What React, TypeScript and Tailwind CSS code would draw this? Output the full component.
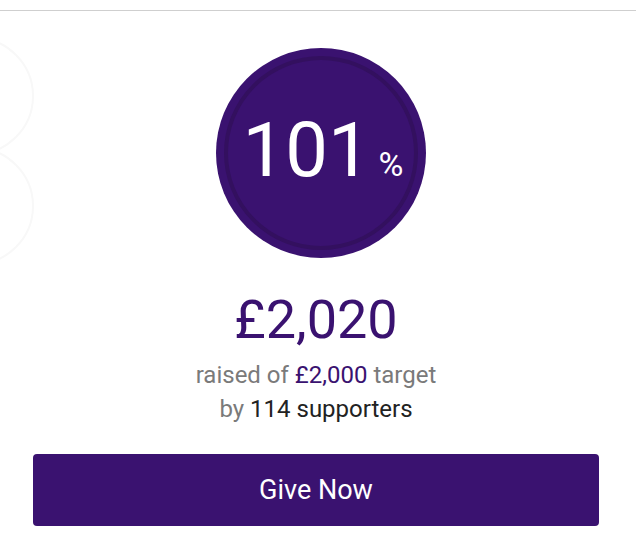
import React from 'react';

// Donation progress card: percentage badge, totals and a call to action
const App: React.FC = () => {
  return (
    <div className="relative w-[636px] h-[533px] overflow-hidden bg-white font-['Roboto',sans-serif]">
      {/* Faint decorative rings on the left edge */}
      <svg className="absolute left-0 top-[11px]" width="60" height="270" viewBox="0 0 60 270" fill="none">
        <circle cx="-25" cy="85" r="58" stroke="#f8f8f8" strokeWidth="2" />
        <circle cx="-25" cy="195" r="58" stroke="#f8f8f8" strokeWidth="2" />
      </svg>

      <div className="h-[10px]" />
      <div className="border-t border-[#cfcfcf]" />

      <div className="relative flex flex-col items-center pt-[37px] pr-[4px]">
        {/* Percentage badge */}
        <div className="w-[210px] h-[210px] ml-[10px] rounded-full bg-[#3a1270] flex items-center justify-center">
          <div className="w-[194px] h-[194px] rounded-full border-[4px] border-[#33105f] flex items-center justify-center">
            <div className="flex items-baseline text-white -mt-[6px] ml-[4px]">
              <span className="text-[76px] leading-none">101</span>
              <span className="text-[34px] leading-none ml-[8px]">%</span>
            </div>
          </div>
        </div>

        {/* Totals */}
        <div className="mt-[35px] text-[54px] leading-none text-[#3a1270]">£2,020</div>
        <div className="mt-[16px] text-[24px] leading-none text-[#7a7a7a]">
          raised of <span className="text-[#3a1270]">£2,000</span> target
        </div>
        <div className="mt-[10px] text-[24px] leading-none text-[#7a7a7a]">
          by <span className="text-[#222222]">114 supporters</span>
        </div>

        {/* Call to action */}
        <button className="mt-[33px] w-[566px] h-[72px] rounded-[4px] bg-[#3a1270] text-white text-[27px]">
          Give Now
        </button>
      </div>
    </div>
  );
};

export default App;
